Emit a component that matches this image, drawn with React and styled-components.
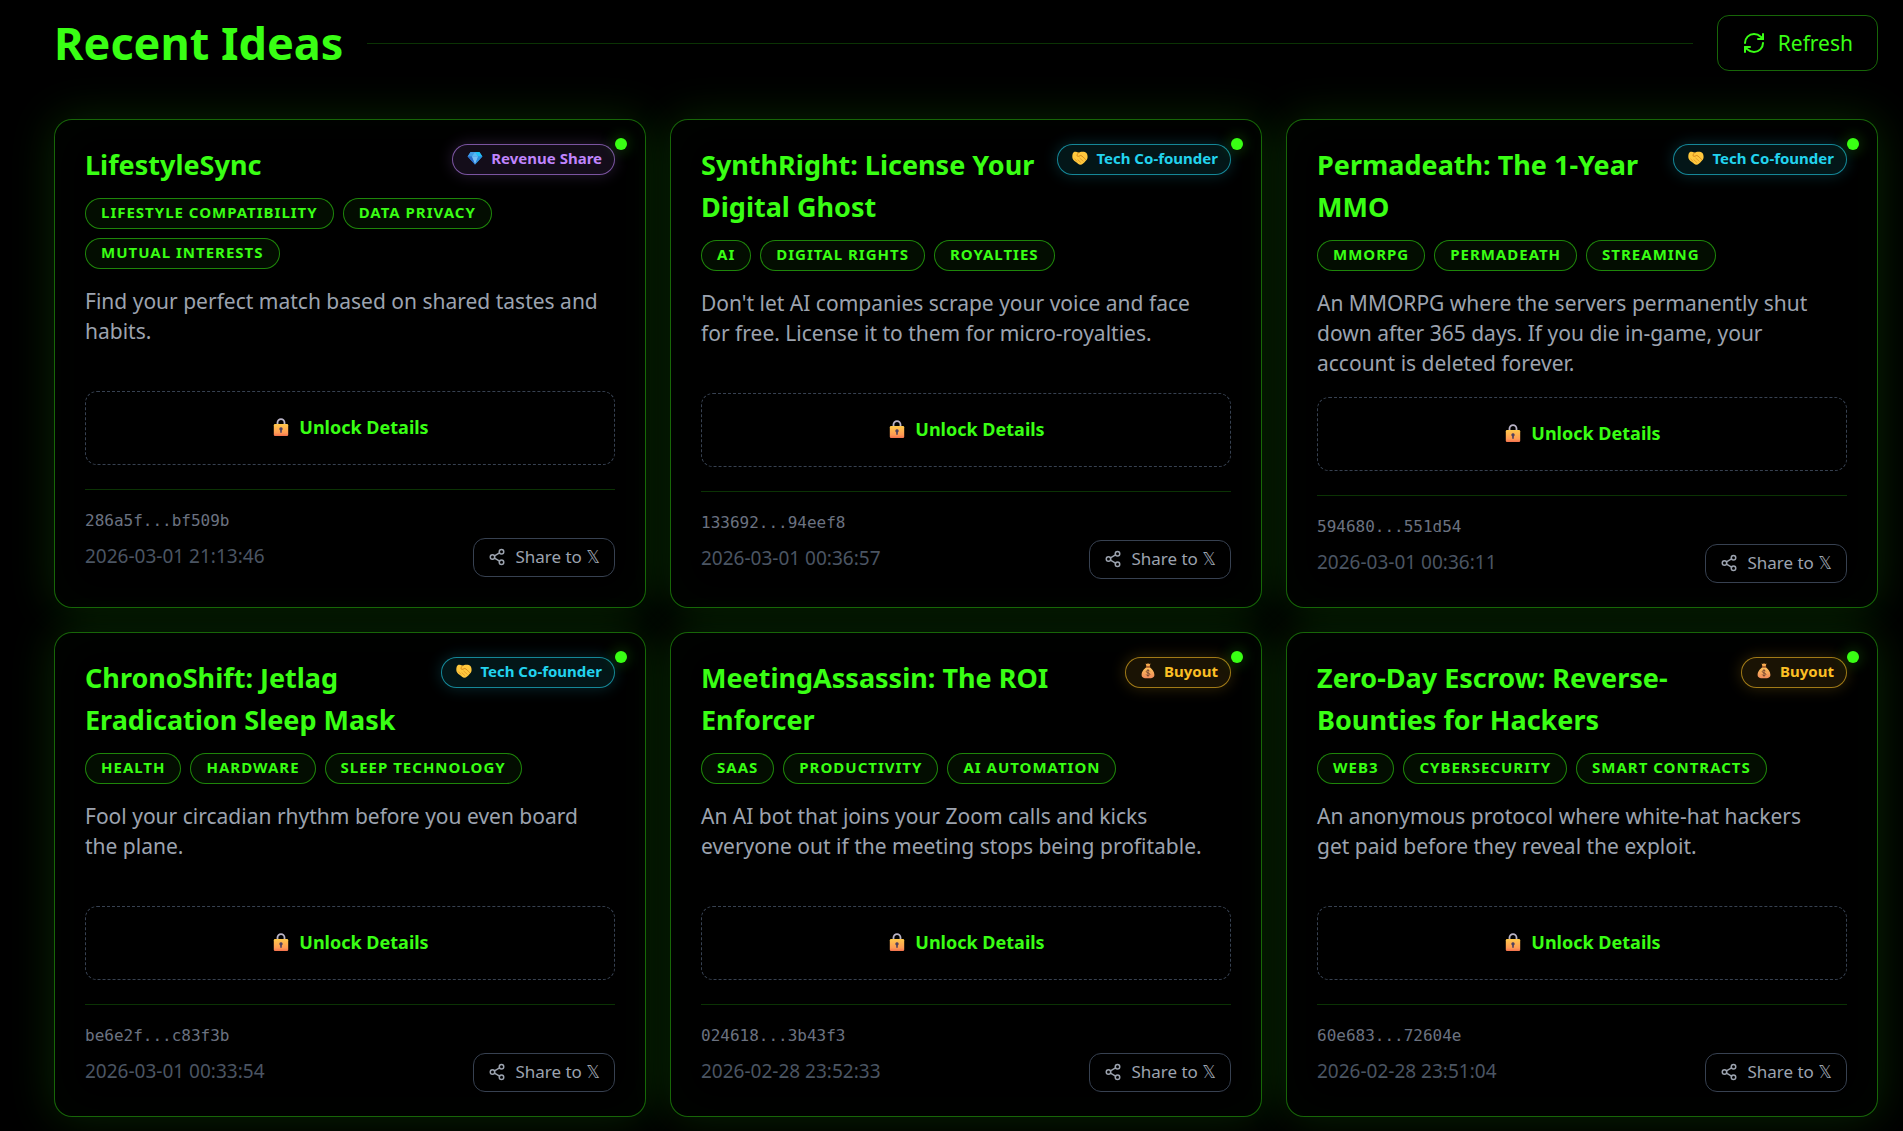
import React from "react";
import styled, { createGlobalStyle, css } from "styled-components";
import { RefreshCw, Share2 } from "lucide-react";

const GlobalStyle = createGlobalStyle`
  *, *::before, *::after { box-sizing: border-box; }
  body {
    margin: 0;
    background: #000;
    color: #39ff14;
    font-family: "Noto Sans", "Open Sans", "DejaVu Sans", sans-serif;
  }
  h1, h2, p, ul { margin: 0; padding: 0; }
  button { font-family: inherit; cursor: pointer; background: transparent; }
`;

const Page = styled.main`
  padding: 15px 25px 15px 54px;
`;

const Header = styled.header`
  display: flex;
  align-items: center;
  gap: 24px;
  margin-bottom: 48px;
`;

const Heading = styled.h1`
  font-size: 45px;
  line-height: 54px;
  font-weight: 700;
`;

const Rule = styled.div`
  flex: 1;
  height: 1px;
  background: rgba(57, 255, 20, 0.2);
`;

const RefreshButton = styled.button`
  display: flex;
  align-items: center;
  gap: 12px;
  padding: 12px 24px;
  border: 1px solid rgba(57, 255, 20, 0.4);
  border-radius: 12px;
  color: #39ff14;
  font-size: 21px;
  line-height: 30px;
`;

const Grid = styled.div`
  display: grid;
  grid-template-columns: repeat(3, minmax(0, 1fr));
  gap: 24px;
`;

const Card = styled.article`
  position: relative;
  padding: 24px 30px;
  border: 1px solid rgba(57, 255, 20, 0.4);
  border-radius: 18px;
  background: #000;
  box-shadow:
    0 0 45px rgba(57, 255, 20, 0.15),
    inset 0 0 45px rgba(57, 255, 20, 0.02);
`;

const StatusDot = styled.span`
  position: absolute;
  top: 18px;
  right: 18px;
  width: 12px;
  height: 12px;
  border-radius: 50%;
  background: #39ff14;
  box-shadow: 0 0 15px rgba(57, 255, 20, 0.4);
`;

const CardTop = styled.div`
  display: flex;
  justify-content: space-between;
  align-items: flex-start;
  gap: 18px;
  margin-bottom: 12px;
`;

const Title = styled.h2`
  font-size: 27px;
  line-height: 42px;
  font-weight: 700;
`;

const tones = {
  purple: css`
    color: #c084fc;
    border-color: rgba(192, 132, 252, 0.6);
    background: rgba(192, 132, 252, 0.1);
    box-shadow: 0 0 15px rgba(192, 132, 252, 0.2);
  `,
  cyan: css`
    color: #22d3ee;
    border-color: rgba(34, 211, 238, 0.6);
    background: rgba(34, 211, 238, 0.1);
    box-shadow: 0 0 15px rgba(34, 211, 238, 0.2);
  `,
  amber: css`
    color: #fbbf24;
    border-color: rgba(251, 191, 36, 0.6);
    background: rgba(251, 191, 36, 0.1);
    box-shadow: 0 0 15px rgba(251, 191, 36, 0.2);
  `,
};

const Badge = styled.span`
  flex: none;
  display: flex;
  align-items: center;
  gap: 6px;
  height: 31px;
  padding: 0 12px 4px;
  border: 1px solid;
  border-radius: 16px;
  font-size: 15px;
  line-height: 24px;
  font-weight: 700;
  ${(p) => tones[p.$tone]}
`;

const Tags = styled.ul`
  display: flex;
  flex-wrap: wrap;
  gap: 9px;
  margin-bottom: 17px;
  list-style: none;
`;

const Tag = styled.li`
  padding: 3px 15px 5px;
  border: 1px solid rgba(57, 255, 20, 0.5);
  border-radius: 16px;
  background: rgba(57, 255, 20, 0.05);
  font-size: 15px;
  line-height: 21px;
  font-weight: 700;
  letter-spacing: 1px;
  text-transform: uppercase;
`;

const Description = styled.p`
  min-height: 86px;
  margin-bottom: 19px;
  padding-right: 12px;
  color: #9ca3af;
  font-size: 21px;
  line-height: 30px;
`;

const UnlockButton = styled.button`
  display: flex;
  align-items: center;
  justify-content: center;
  gap: 8px;
  width: 100%;
  height: 74px;
  padding: 0 0 2px;
  border: 1px dashed #374151;
  border-radius: 12px;
  color: #39ff14;
  font-size: 18px;
  line-height: 27px;
  font-weight: 700;
`;

const CardFooter = styled.footer`
  margin-top: 24px;
  padding-top: 18px;
  border-top: 1px solid rgba(57, 255, 20, 0.2);
`;

const IdeaHash = styled.p`
  margin-bottom: 4px;
  color: #6b7280;
  font-family: "DejaVu Sans Mono", "Liberation Mono", monospace;
  font-size: 16px;
  line-height: 26px;
`;

const FooterRow = styled.div`
  display: flex;
  align-items: center;
  justify-content: space-between;
`;

const Timestamp = styled.time`
  color: #4b5563;
  font-size: 19px;
  line-height: 30px;
  padding-bottom: 4px;
`;

const ShareButton = styled.button`
  display: flex;
  align-items: center;
  gap: 9px;
  padding: 4px 14px 6px;
  border: 1px solid #374151;
  border-radius: 12px;
  color: #9ca3af;
  font-size: 17px;
  line-height: 27px;
`;

function Gem() {
  return (
    <svg width="20" height="18" viewBox="0 0 20 18" aria-hidden="true">
      <path d="M5.6 3h8.8L17.4 7.4 10 15.6 2.6 7.4z" fill="#2f86dc" />
      <path d="M5.6 3H10L6.8 7.4H2.6z" fill="#3f9be6" />
      <path d="M10 3h4.4l3 4.4h-4.2z" fill="#1fc3f7" />
      <path d="M10 3l3.2 4.4H6.8z" fill="#5bb8f5" />
      <path d="M6.8 7.4h6.4L10 15.6z" fill="#74bdf6" />
      <path d="M13.2 7.4h4.2L10 15.6z" fill="#2b8fe0" />
      <path d="M2.6 7.4h4.2L10 15.6z" fill="#2a69c9" />
    </svg>
  );
}

function Hands() {
  return (
    <svg width="20" height="18" viewBox="0 0 20 18" aria-hidden="true">
      <path
        d="M4.4 2.8c1.4-.5 2.800.200 4.100.9 1.400-.8 3.900-1.500 6.400-.6 1.900.7 2.700 2.600 2.700 4.900 0 1.900-.9 3.100-2.200 4.200-1.400 1.400-2.900 3.500-5.200 3.500-1.400 0-2.300-1-3.200-1.900C4.500 11.900 2.300 10.700 2.300 7.400c0-1.900.6-4.100 2.100-4.600z"
        fill="#ffc83d"
      />
      <path
        d="M8.500 3.700C7.600 4.900 6.700 6 7.200 7c.7 1.100 2.500-.2 3.600-.6 1.600.8 3.400 2.400 4.600 4"
        fill="none"
        stroke="#d98a1c"
        strokeWidth="1"
        strokeLinecap="round"
      />
      <path
        d="M9.800 9.200l3.400 3M7.900 10.800l3 2.800M4.600 9.800l2.200 2.300"
        fill="none"
        stroke="#e39b28"
        strokeWidth=".9"
        strokeLinecap="round"
      />
    </svg>
  );
}

function MoneyBag() {
  return (
    <svg width="20" height="18" viewBox="0 0 20 18" aria-hidden="true">
      <defs>
        <linearGradient id="bag" x1="0" y1="0" x2="0" y2="1">
          <stop offset="0" stopColor="#ffc45c" />
          <stop offset="1" stopColor="#f0895a" />
        </linearGradient>
      </defs>
      <path d="M7.600 1.600l1.300.5L10 1.200l1.200.9 1.300-.5-.9 3H8.500z" fill="#f5a84e" />
      <path d="M8.300 5.200h3.500c2.300 1.500 4.600 4.600 4.600 7.500 0 2.600-1.800 3.600-6.400 3.600s-6.400-1-6.400-3.600c0-2.900 2.400-6 4.700-7.500z" fill="url(#bag)" />
      <rect x="7.800" y="4.300" width="4.500" height="1.400" rx=".7" fill="#b8662f" />
      <path
        d="M11.700 9.300c-.3-.7-.9-1-1.700-1-1 0-1.700.5-1.700 1.300 0 1.800 3.500.9 3.500 2.700 0 .8-.8 1.300-1.800 1.300-.9 0-1.600-.4-1.800-1.100M10 7.300v7.300"
        fill="none"
        stroke="#7c4a32"
        strokeWidth="1"
      />
    </svg>
  );
}

function Lock() {
  return (
    <svg width="20" height="20" viewBox="0 0 20 20" aria-hidden="true">
      <defs>
        <linearGradient id="lock" x1="0" y1="0" x2="0" y2="1">
          <stop offset="0" stopColor="#ffc84a" />
          <stop offset=".75" stopColor="#ff9a54" />
          <stop offset="1" stopColor="#f2704e" />
        </linearGradient>
      </defs>
      <path d="M6.500 8V5.600a3.500 3.500 0 0 1 7 0V8" fill="none" stroke="#b9b3c6" strokeWidth="1.800" />
      <rect x="2.800" y="7" width="14.400" height="12" rx="1.200" fill="url(#lock)" />
      <path d="M10 10.200a1.700 1.700 0 0 1 .8 3.200v2.400H9.200v-2.400a1.700 1.700 0 0 1 .8-3.200z" fill="#50405f" />
    </svg>
  );
}

const deals = {
  share: { label: "Revenue Share", tone: "purple", Icon: Gem },
  cofounder: { label: "Tech Co-founder", tone: "cyan", Icon: Hands },
  buyout: { label: "Buyout", tone: "amber", Icon: MoneyBag },
};

const ideas = [
  {
    title: "LifestyleSync",
    deal: "share",
    tags: ["Lifestyle Compatibility", "Data Privacy", "Mutual Interests"],
    text: "Find your perfect match based on shared tastes and habits.",
    hash: "286a5f...bf509b",
    time: "2026-03-01 21:13:46",
  },
  {
    title: "SynthRight: License Your Digital Ghost",
    deal: "cofounder",
    tags: ["AI", "Digital Rights", "Royalties"],
    text: "Don't let AI companies scrape your voice and face for free. License it to them for micro-royalties.",
    hash: "133692...94eef8",
    time: "2026-03-01 00:36:57",
  },
  {
    title: "Permadeath: The 1-Year MMO",
    deal: "cofounder",
    tags: ["MMORPG", "Permadeath", "Streaming"],
    text: "An MMORPG where the servers permanently shut down after 365 days. If you die in-game, your account is deleted forever.",
    hash: "594680...551d54",
    time: "2026-03-01 00:36:11",
  },
  {
    title: "ChronoShift: Jetlag Eradication Sleep Mask",
    deal: "cofounder",
    tags: ["Health", "Hardware", "Sleep Technology"],
    text: "Fool your circadian rhythm before you even board the plane.",
    hash: "be6e2f...c83f3b",
    time: "2026-03-01 00:33:54",
  },
  {
    title: "MeetingAssassin: The ROI Enforcer",
    deal: "buyout",
    tags: ["SaaS", "Productivity", "AI Automation"],
    text: "An AI bot that joins your Zoom calls and kicks everyone out if the meeting stops being profitable.",
    hash: "024618...3b43f3",
    time: "2026-02-28 23:52:33",
  },
  {
    title: "Zero-Day Escrow: Reverse-Bounties for Hackers",
    deal: "buyout",
    tags: ["Web3", "Cybersecurity", "Smart Contracts"],
    text: "An anonymous protocol where white-hat hackers get paid before they reveal the exploit.",
    hash: "60e683...72604e",
    time: "2026-02-28 23:51:04",
  },
];

function IdeaCard({ idea }) {
  const { label, tone, Icon } = deals[idea.deal];
  return (
    <Card>
      <StatusDot />
      <CardTop>
        <Title>{idea.title}</Title>
        <Badge $tone={tone}>
          <Icon />
          {label}
        </Badge>
      </CardTop>
      <Tags>
        {idea.tags.map((tag) => (
          <Tag key={tag}>{tag}</Tag>
        ))}
      </Tags>
      <Description>{idea.text}</Description>
      <UnlockButton type="button">
        <Lock />
        Unlock Details
      </UnlockButton>
      <CardFooter>
        <IdeaHash>{idea.hash}</IdeaHash>
        <FooterRow>
          <Timestamp>{idea.time}</Timestamp>
          <ShareButton type="button">
            <Share2 size={18} strokeWidth={2} aria-hidden="true" />
            Share to 𝕏
          </ShareButton>
        </FooterRow>
      </CardFooter>
    </Card>
  );
}

export default function App() {
  return (
    <>
      <GlobalStyle />
      <Page>
        <Header>
          <Heading>Recent Ideas</Heading>
          <Rule />
          <RefreshButton type="button">
            <RefreshCw size={24} aria-hidden="true" />
            Refresh
          </RefreshButton>
        </Header>
        <Grid>
          {ideas.map((idea) => (
            <IdeaCard key={idea.hash} idea={idea} />
          ))}
        </Grid>
      </Page>
    </>
  );
}
